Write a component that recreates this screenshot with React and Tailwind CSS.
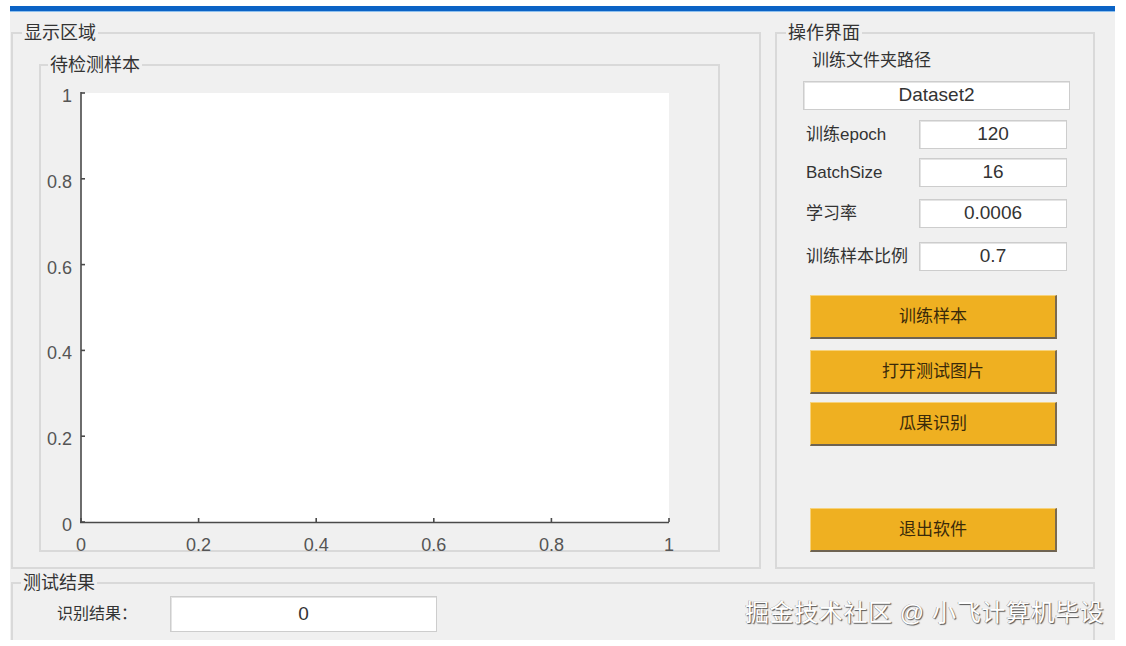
const cjk = "font-['Liberation_Sans','Noto_Sans_CJK_SC',sans-serif]";

const yTicks = [
  { v: '1', y: 18 },
  { v: '0.8', y: 103.8 },
  { v: '0.6', y: 189.6 },
  { v: '0.4', y: 275.4 },
  { v: '0.2', y: 361.2 },
  { v: '0', y: 447 },
];

const xTicks = [
  { v: '0', x: 40 },
  { v: '0.2', x: 157.6 },
  { v: '0.4', x: 275.2 },
  { v: '0.6', x: 392.8 },
  { v: '0.8', x: 510.4 },
  { v: '1', x: 628 },
];

// empty MATLAB-style axes, 0..1 on both sides
function Axes() {
  return (
    <svg width="676" height="484" className="block overflow-visible">
      <rect x="40" y="18" width="588" height="430" fill="#ffffff" />
      <g stroke="#4a4a4a" strokeWidth="1.6" fill="none">
        <line x1="40" y1="17" x2="40" y2="448" />
        <line x1="39" y1="447.5" x2="628" y2="447.5" />
        {yTicks.map((t) => (
          <line key={t.v} x1="40" y1={t.y} x2="44" y2={t.y} />
        ))}
        {xTicks.map((t) => (
          <line key={t.v} x1={t.x} y1="447" x2={t.x} y2="443" />
        ))}
      </g>
      <g fill="#555" fontSize="18" fontFamily="Liberation Sans, Arial, sans-serif">
        {yTicks.map((t) => (
          <text key={t.v} x="31" y={t.y + 9} textAnchor="end">
            {t.v}
          </text>
        ))}
        {xTicks.map((t) => (
          <text key={t.v} x={t.x} y="476" textAnchor="middle">
            {t.v}
          </text>
        ))}
      </g>
    </svg>
  );
}

function Field({ value, className }) {
  return (
    <div
      className={`flex items-center justify-center bg-white border border-[#cdcdcd] shadow-[inset_1px_1px_0_#e4e4e4] text-[19px] text-[#333] ${className}`}
    >
      {value}
    </div>
  );
}

function Btn({ children, className = '' }) {
  return (
    <button
      className={`w-[247px] h-[44px] bg-[#efb021] text-[17px] text-[#3a2a0a] border-t border-l border-[#f7d27a] border-r-2 border-b-2 border-r-[#7a6a50] border-b-[#6e6352] ${className}`}
    >
      {children}
    </button>
  );
}

function Param({ label, value, className = '' }) {
  return (
    <div className={`flex items-center ${className}`}>
      <span className="w-[142px] pl-[29px] text-[17px] text-[#333] whitespace-nowrap">{label}</span>
      <Field value={value} className="w-[148px] h-[29px]" />
    </div>
  );
}

const legend = 'px-[2px] text-[18px] leading-[20px] text-[#333]';

export default function App() {
  return (
    <div className={`w-[1126px] h-[646px] bg-white pt-[6px] pl-[10px] ${cjk}`}>
      <div className="w-[1105px] h-[6px] bg-[#0b63c5] border-b border-[#8ec0ee]" />
      <div className="relative w-[1105px] h-[628px] bg-[#f0f0f0] overflow-hidden pl-[1px]">
        <div className="flex gap-[14px] mt-[11px]">
          <fieldset className="w-[750px] h-[546px] border-2 border-[#d9d9d9]">
            <legend className={`ml-[9px] ${legend}`}>显示区域</legend>
            <fieldset className="ml-[26px] mt-[12px] w-[681px] h-[497px] border-2 border-[#d9d9d9]">
              <legend className={`ml-[7px] ${legend}`}>待检测样本</legend>
              <Axes />
            </fieldset>
          </fieldset>

          <fieldset className="w-[320px] h-[546px] border-2 border-[#d9d9d9]">
            <legend className={`ml-[9px] ${legend}`}>操作界面</legend>
            <div className="mt-[8px] pl-[35px] text-[17px] leading-[20px] text-[#333]">训练文件夹路径</div>
            <Field value="Dataset2" className="ml-[26px] mt-[10px] w-[267px] h-[29px]" />
            <Param label="训练epoch" value="120" className="mt-[10px]" />
            <Param label="BatchSize" value="16" className="mt-[9px]" />
            <Param label="学习率" value="0.0006" className="mt-[12px]" />
            <Param label="训练样本比例" value="0.7" className="mt-[14px]" />
            <div className="flex flex-col pl-[33px]">
              <Btn className="mt-[24px]">训练样本</Btn>
              <Btn className="mt-[11px]">打开测试图片</Btn>
              <Btn className="mt-[8px]">瓜果识别</Btn>
              <Btn className="mt-[62px]">退出软件</Btn>
            </div>
          </fieldset>
        </div>

        <fieldset className="mt-[4px] w-[1084px] h-[90px] border-2 border-[#d9d9d9]">
          <legend className={`ml-[8px] ${legend}`}>测试结果</legend>
          <div className="flex items-center mt-[3px]">
            <span className="w-[157px] pl-[44px] text-[16px] text-[#333]">识别结果：</span>
            <Field value="0" className="w-[267px] h-[36px]" />
          </div>
        </fieldset>

        <div className="absolute left-[735px] top-[586px] text-[24px] leading-[30px] text-white tracking-[0.6px] [text-shadow:1px_1px_1px_#555,-0.5px_-0.5px_0_#999] whitespace-nowrap">
          掘金技术社区 @ 小飞计算机毕设
        </div>
      </div>
    </div>
  );
}
